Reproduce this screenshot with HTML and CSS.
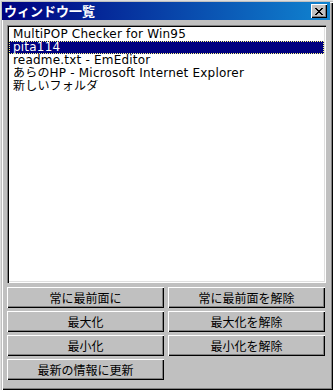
FILE: index.html
```html
<!DOCTYPE html>
<html lang="ja">
<head>
	<meta charset="UTF-8">
	<title>ウィンドウ一覧</title>
<link rel="stylesheet" href="styles.css">
</head>
<body>
	<div id="win">
		<div id="title">
			<h1>ウィンドウ一覧</h1>
			<span class="close">
				<svg width="8" height="7" viewBox="0 0 8 7"><path d="M0 0h2v1h1v1h2V1h1V0h2v1H7v1H6v1H5v1h1v1h1v1h1v1H6V6H5V5H3v1H2v1H0V6h1V5h1V4h1V3H2V2H1V1H0z" fill="#000"/></svg>
			</span>
		</div>

		<ul id="list">
			<li>MultiPOP Checker for Win95</li>
			<li class="sel">pita114</li>
			<li>readme.txt - EmEditor</li>
			<li>あらのHP - Microsoft Internet Explorer</li>
			<li>新しいフォルダ</li>
		</ul>

		<div id="btns">
			<button>常に最前面に</button>
			<button>常に最前面を解除</button>
			<button>最大化</button>
			<button>最大化を解除</button>
			<button>最小化</button>
			<button>最小化を解除</button>
			<button>最新の情報に更新</button>
		</div>
	</div>
</body>
</html>
```

FILE: styles.css
```css
*{margin: 0;padding: 0;list-style: none;box-sizing: border-box}
body{background: #c0c0c0;font-family: "DejaVu Sans","Noto Sans CJK JP",sans-serif;font-size: 12px}
#win{width: 333px;height: 390px;background: #c0c0c0;padding: 2px 3px 2px 2px;display: flex;flex-direction: column;
	box-shadow: inset 1px 1px #dfdfdf,inset 2px 2px #c0c0c0,inset 3px 3px #fff,inset -1px -1px #000,inset -2px -2px #808080}
#title{height: 18px;display: flex;align-items: center;justify-content: space-between;padding: 0 3px 0 2px;background: linear-gradient(to right,#000080,#1084d0)}
#title h1{font-size: 13px;font-weight: bold;color: #fff;font-family: "Noto Sans CJK JP",sans-serif;line-height: 18px}
#title .close{width: 16px;height: 14px;background: #c0c0c0;display: flex;align-items: center;justify-content: center;
	box-shadow: inset 1px 1px #fff,inset -1px -1px #000,inset -2px -2px #808080}
#list{margin: 5px 4px 0 5px;height: 258px;background: #fff;padding: 3px 2px;
	box-shadow: inset 1px 1px #808080,inset 2px 2px #000,inset -1px -1px #fff,inset -2px -2px #dfdfdf}
#list li{height: 13px;line-height: 13px;padding-left: 4px;color: #000;white-space: nowrap;overflow: hidden;letter-spacing: 0.2px}
#list li.sel{background: #000080;color: #fff;outline: 1px dotted #ffff80;outline-offset: -1px}
#btns{display: grid;grid-template-columns: 157px 157px;column-gap: 4px;row-gap: 3px;margin: 4px 0 0 5px}
#btns button{height: 21px;background: #c0c0c0;border: none;font-family: "Noto Sans CJK JP",sans-serif;font-size: 12px;color: #000;
	box-shadow: inset 1px 1px #fff,inset -1px -1px #000,inset -2px -2px #808080;line-height: 19px}
```
